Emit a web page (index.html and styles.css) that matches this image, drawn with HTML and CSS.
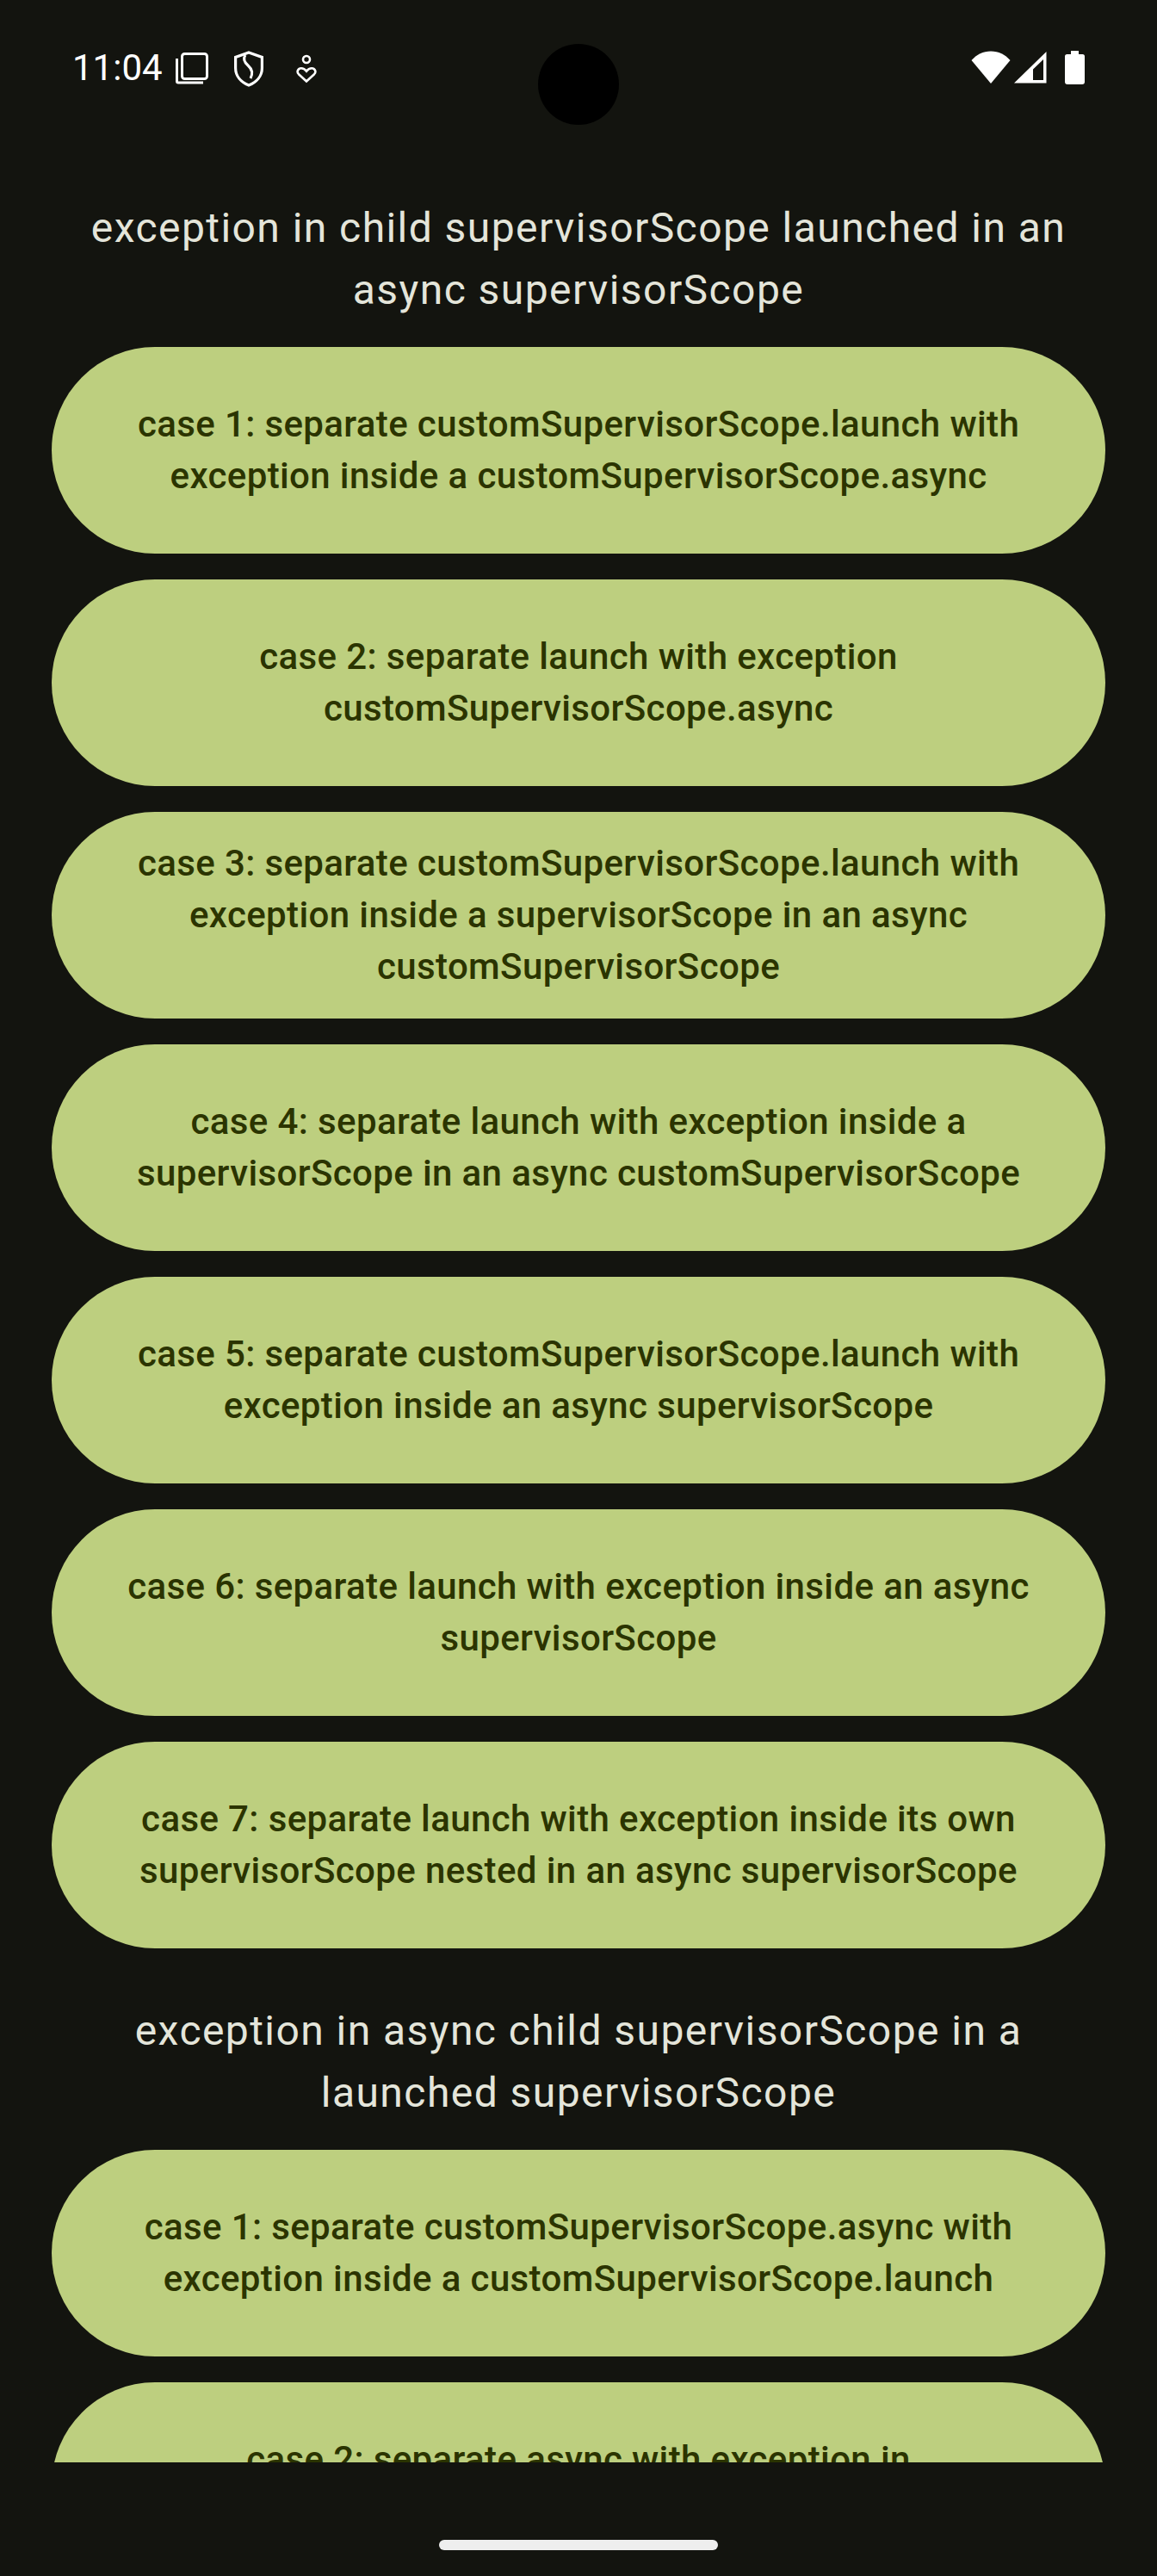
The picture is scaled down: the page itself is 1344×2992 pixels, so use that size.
FILE: index.html
```html
<!DOCTYPE html>
<html lang="en">
<head>
<meta charset="utf-8">
<title>supervisorScope cases</title>
<link rel="stylesheet" href="styles.css">
</head>
<body>
<div class="screen">
  <header class="status">
    <div class="status-left">
      <span class="time">11:04</span>
      <svg class="ic-windows" width="38" height="38" viewBox="0 0 38 38" fill="none" stroke="#fff" stroke-width="3">
        <rect x="7.500" y="1.500" width="29" height="29" rx="3"/>
        <path d="M1.500 7v26.500a1.500 1.500 0 0 0 1.500 1.500h29"/>
      </svg>
      <svg class="ic-shield" width="34" height="42" viewBox="0 0 34 42" fill="none" stroke="#fff" stroke-width="3.200">
        <path d="M17 2 32.400 7.500V20c0 9.500-6.500 16.500-15.400 20C8.100 36.500 1.600 29.500 1.600 20V7.500Z"/>
        <path d="M13 5c-3.500 5-.5 9 3.500 12.500s6 7.500 2.500 14.500" stroke-width="3"/>
      </svg>
      <svg class="ic-heart" width="24" height="34" viewBox="0 0 24 34" fill="none" stroke="#fff" stroke-width="2.600">
        <circle cx="12" cy="6" r="4"/>
        <path d="M12 31.500 3 23.200c-3-3-.5-7 2.800-7 2.700 0 4.700 1.500 6.200 3.500 1.500-2 3.500-3.500 6.200-3.500 3.300 0 5.800 4 2.800 7Z"/>
      </svg>
    </div>
    <div class="status-right">
      <svg class="ic-wifi" width="46" height="38" viewBox="0 0 46 38" fill="#fff">
        <path d="M0.500 11C6.500 4.500 14 .5 23 .5S39.500 4.500 45.500 11L23 38Z"/>
      </svg>
      <svg class="ic-signal" width="38" height="38" viewBox="0 0 38 38">
        <path fill-rule="evenodd" fill="#fff" d="M37.500 1V37.500H0ZM34 10 22 21.500V34H34Z"/>
      </svg>
      <svg class="ic-battery" width="23" height="39" viewBox="0 0 23 39" fill="#fff">
        <path d="M7 0h9v4h4.500A2.500 2.500 0 0 1 23 6.500V36a3 3 0 0 1-3 3H3a3 3 0 0 1-3-3V6.500A2.500 2.500 0 0 1 2.500 4H7Z"/>
      </svg>
    </div>
  </header>
  <div class="camera"></div>
  <main class="list">
    <h2 class="title first">exception in child supervisorScope launched in an async supervisorScope</h2>
    <button class="case">case 1: separate customSupervisorScope.launch with exception inside a customSupervisorScope.async</button>
    <button class="case">case 2: separate launch with exception customSupervisorScope.async</button>
    <button class="case">case 3: separate customSupervisorScope.launch with exception inside a supervisorScope in an async customSupervisorScope</button>
    <button class="case">case 4: separate launch with exception inside a supervisorScope in an async customSupervisorScope</button>
    <button class="case">case 5: separate customSupervisorScope.launch with exception inside an async supervisorScope</button>
    <button class="case">case 6: separate launch with exception inside an async supervisorScope</button>
    <button class="case">case 7: separate launch with exception inside its own supervisorScope nested in an async supervisorScope</button>
    <h2 class="title">exception in async child supervisorScope in a launched supervisorScope</h2>
    <button class="case">case 1: separate customSupervisorScope.async with exception inside a customSupervisorScope.launch</button>
    <button class="case">case 2: separate async with exception in customSupervisorScope.launch</button>
  </main>
  <div class="nav"><div class="home"></div></div>
</div>
</body>
</html>
```

FILE: styles.css
```css
* { box-sizing: border-box; }
html, body { margin: 0; padding: 0; background: #13140f; }
.screen {
  position: relative;
  width: 1344px;
  height: 2992px;
  display: flex;
  flex-direction: column;
  background: #13140f;
  font-family: Roboto, sans-serif;
  overflow: hidden;
}
.status {
  height: 160px;
  flex: none;
  display: flex;
  justify-content: space-between;
  align-items: flex-start;
  padding: 59px 84px 0 84px;
}
.status-left, .status-right { display: flex; align-items: flex-start; }
.time {
  font-size: 42px;
  line-height: 40px;
  color: #fff;
  width: 120px;
}
.ic-windows { margin-top: 2px; }
.ic-shield { margin-left: 30px; }
.ic-heart { margin-left: 38px; margin-top: 4px; }
.ic-signal { margin-left: 4px; }
.ic-battery { margin-left: 21px; }
.camera {
  position: absolute;
  left: 625px;
  top: 51px;
  width: 94px;
  height: 94px;
  border-radius: 50%;
  background: #000;
}
.list {
  height: 2700px;
  flex: none;
  overflow: hidden;
  display: flex;
  flex-direction: column;
  gap: 30px;
  padding: 0 60px;
}
.title {
  margin: 30px 0 0;
  padding: 0 30px;
  font-size: 48px;
  line-height: 72px;
  font-weight: 400;
  letter-spacing: 1.44px;
  text-align: center;
  color: #e4e5da;
}
.title.first { margin-top: 69px; }
.case {
  flex: none;
  height: 240px;
  border: 0;
  border-radius: 120px;
  padding: 0 72px;
  background: #bdcf7f;
  color: #2b3400;
  font-family: inherit;
  font-size: 42px;
  line-height: 60px;
  font-weight: 500;
  letter-spacing: 0.38px;
  text-align: center;
}
.nav {
  flex: 1;
  display: flex;
  justify-content: center;
  padding-top: 90px;
}
.home {
  width: 324px;
  height: 12px;
  border-radius: 6px;
  background: #eeeeee;
}
```
